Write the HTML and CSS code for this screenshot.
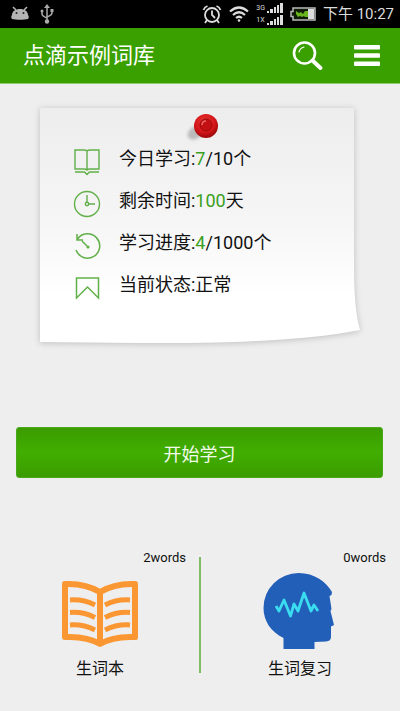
FILE: index.html
```html
<!DOCTYPE html>
<html lang="zh-CN">
<head>
<meta charset="utf-8">
<meta name="viewport" content="width=device-width, initial-scale=1">
<title>点滴示例词库</title>
<link rel="stylesheet" href="styles.css">
</head>
<body>
<div class="status">
  <div class="status-group status-left">
    <svg width="20" height="16" viewBox="0 0 20 16" aria-hidden="true">
      <path d="M3 1l3 3M17 1l-3 3" stroke="#b5b5b5" stroke-width="1.5"/>
      <path d="M2 9c0-8 16-8 16 0 1 1 1 3 0 4-4 1-12 1-16 0-1-1-1-3 0-4z" fill="#b5b5b5"/>
      <circle cx="6.500" cy="7" r="1" fill="#222"/><circle cx="13.500" cy="7" r="1" fill="#222"/>
    </svg>
    <svg width="14" height="20" viewBox="0 0 14 20" fill="none" stroke="#aaa" stroke-width="1.500" aria-hidden="true">
      <path d="M7 3v14M2 7v3q0 2 5 4M12 7v2q0 2-5 4"/>
      <path d="M4 4l3-4 3 4z" fill="#aaa" stroke="none"/>
      <circle cx="2" cy="7" r="1.500" fill="#aaa" stroke="none"/><path d="M10.500 5h3v3h-3z" fill="#aaa" stroke="none"/>
      <circle cx="7" cy="17.500" r="2.200" fill="#aaa" stroke="none"/>
    </svg>
  </div>
  <div class="status-group">
    <svg width="20" height="20" viewBox="0 0 20 20" fill="none" stroke="#ddd" stroke-width="1.800" aria-hidden="true">
      <circle cx="10" cy="11" r="7"/><path d="M10 6.500V11l3 3M1.500 6q1-3 4-4M18.500 6q-1-3-4-4M5 16l-2 3M15 16l2 3"/>
    </svg>
    <svg width="20" height="16" viewBox="0 0 20 16" fill="none" stroke="#ddd" stroke-width="2.200" aria-hidden="true">
      <path d="M1 5.500q9-8 18 0M4 9q6-5.500 12 0M7 12q3-2.500 6 0"/><circle cx="10" cy="14.500" r="1.300" fill="#ddd" stroke="none"/>
    </svg>
    <div class="signals">
      <div class="signal"><span>3G</span>
        <svg width="16" height="10" viewBox="0 0 16 10" fill="#ddd" aria-hidden="true"><path d="M0 8h2v2H0zM3 6h3v4H3zM7 4h2v6H7zM10 2h2v8h-2zM13 0h3v10h-3z"/></svg>
      </div>
      <div class="signal"><span>1X</span>
        <svg width="16" height="10" viewBox="0 0 16 10" fill="#ddd" aria-hidden="true"><path d="M0 8h2v2H0zM3 6h3v4H3zM7 4h2v6H7zM10 2h2v8h-2zM13 0h3v10h-3z"/></svg>
      </div>
    </div>
    <svg width="26" height="14" viewBox="0 0 26 14" aria-hidden="true">
      <path d="M3 1h22v12H3V9.500H1v-5h2z" fill="#101b08" stroke="#bbb" stroke-width="1.500"/>
      <path d="M18 2h6v10h-6z" fill="#ddd"/>
      <path d="M6 4l3 2 2-1 2 2 2-3h3v6h-3l-1-1-2 1-2-1-2 1-2-3z" fill="#69b51c"/>
    </svg>
    <span class="clock">下午 10:27</span>
  </div>
</div>

<header class="bar">
  <h1>点滴示例词库</h1>
  <button class="icon-btn" type="button" aria-label="搜索">
    <svg width="32" height="30" viewBox="0 0 32 30" fill="none" stroke="#fff" stroke-linecap="round" aria-hidden="true">
      <circle cx="12.500" cy="12" r="10.500" stroke-width="2.600"/><path d="M7 11q1-4 5-5" stroke-width="1.200"/>
      <path d="M20.500 19.500l8 7.500" stroke-width="4"/>
    </svg>
  </button>
  <button class="icon-btn" type="button" aria-label="菜单">
    <svg width="26" height="21" viewBox="0 0 26 21" fill="#fff" aria-hidden="true">
      <rect width="26" height="4.500" rx="1"/><rect y="8.200" width="26" height="4.500" rx="1"/><rect y="16.500" width="26" height="4.500" rx="1"/>
    </svg>
  </button>
</header>

<main>
  <section class="note">
    <svg class="paper" viewBox="0 0 322 236" preserveAspectRatio="none" aria-hidden="true">
      <defs><linearGradient id="paper" x2="0" y2="1"><stop stop-color="#ededed"/><stop offset=".5" stop-color="#f6f6f6"/><stop offset=".8" stop-color="#fff"/></linearGradient></defs>
      <path d="M0 0H315V160Q315 202 321 222Q250 236 100 235L0 234Z" fill="url(#paper)"/>
    </svg>
    <svg class="pin" width="36" height="32" viewBox="0 0 36 32" aria-hidden="true">
      <defs>
        <radialGradient id="pin" cx=".45" cy=".35" r=".6"><stop stop-color="#e83a36"/><stop offset=".7" stop-color="#d41519"/><stop offset="1" stop-color="#a50a0d"/></radialGradient>
        <filter id="soft" x="-.5" y="-.5" width="2" height="2"><feGaussianBlur stdDeviation="1.500"/></filter>
      </defs>
      <ellipse cx="11" cy="21" rx="8" ry="6" fill="#999" opacity=".6" filter="url(#soft)" transform="rotate(-35 11 21)"/>
      <circle cx="22" cy="14" r="12" fill="url(#pin)"/>
      <circle cx="22" cy="13" r="6" fill="#c21013" stroke="#a00a0d"/>
      <path d="M18 13q0-4 4-4" fill="none" stroke="#ee6a64" stroke-width="1.500"/>
    </svg>
    <ul class="stats">
      <li>
        <svg width="28" height="28" viewBox="0 0 28 28" fill="none" stroke="#62b04a" stroke-width="1.400" aria-hidden="true"><path d="M14 21V3q-1-1-3-1H2v19h9q2 0 3 1 1-1 3-1h9V2h-9q-2 0-3 1M2 24h9.500l2.500 2.500 2.500-2.500H26"/></svg>
        <span>今日学习:<b>7</b>/10个</span>
      </li>
      <li>
        <svg width="28" height="28" viewBox="0 0 28 28" fill="none" stroke="#62b04a" stroke-width="1.400" aria-hidden="true"><circle cx="14" cy="14" r="12.500"/><path d="M14 5v7.500M15.500 14H22"/><circle cx="14" cy="14" r="1.700"/></svg>
        <span>剩余时间:<b>100</b>天</span>
      </li>
      <li>
        <svg width="28" height="28" viewBox="0 0 28 28" fill="none" stroke="#62b04a" stroke-width="1.500" aria-hidden="true"><path d="M3 18A12.200 12.200 0 1 0 4.500 7M4 2v6h6M9 9l5 5"/><circle cx="15" cy="15" r="1.600" fill="#62b04a" stroke="none"/></svg>
        <span>学习进度:<b>4</b>/1000个</span>
      </li>
      <li>
        <svg width="28" height="28" viewBox="0 0 28 28" fill="none" stroke="#62b04a" stroke-width="1.500" aria-hidden="true"><path d="M3.500 4h22v20l-11-11-11 11z"/></svg>
        <span>当前状态:正常</span>
      </li>
    </ul>
  </section>

  <button class="start" type="button">开始学习</button>

  <nav class="tiles">
    <a class="tile" href="#words">
      <span class="count">2words</span>
      <svg width="78" height="78" viewBox="0 0 78 78" aria-hidden="true">
        <g fill="none" stroke="#fb9733" stroke-width="6" stroke-linejoin="round">
          <path d="M39 20Q24 11 4 12V65Q26 64 39 72Q52 64 74 65V12Q54 11 39 20V71"/>
          <path d="M9 28Q22 27 34 33M9 40.500Q22 39.500 34 45.500M9 53Q22 52 34 58M44 33Q56 27 69 28M44 45.500Q56 39.500 69 40.500M44 58Q56 52 69 53" stroke-width="5"/>
        </g>
      </svg>
      <span class="label">生词本</span>
    </a>
    <a class="tile" href="#review">
      <span class="count">0words</span>
      <svg width="74" height="78" viewBox="0 0 74 78" aria-hidden="true">
        <path d="M35.500 1C52 1 63 10 69 20L68.500 23 66.500 24 68.500 37 67.500 39 71 53 68 54.500V65Q68 69 63 69.500L51.500 70V77H20.500V66C8 60 .5 49 .5 36A35 35 0 0 1 35.500 1z" fill="#225fb8"/>
        <path d="M13 34l3 5 5-11L27.500 44l3.500-12 4 7L41 21l7 18 3-6 4 6" fill="none" stroke="#3adcf0" stroke-width="2.800" stroke-linejoin="round"/>
      </svg>
      <span class="label">生词复习</span>
    </a>
  </nav>
</main>
</body>
</html>
```
FILE: styles.css
```css
* { box-sizing: border-box; }

body {
  margin: 0;
  min-height: 100vh;
  background: #eee;
  color: #111;
  font-family: Roboto, "Noto Sans CJK SC", sans-serif;
}

svg { display: block; flex: none; }

.status {
  display: flex;
  align-items: center;
  justify-content: space-between;
  height: 28px;
  padding: 0 6px 0 10px;
  background: #000;
  color: #ddd;
}
.status-group { display: flex; align-items: center; gap: 7px; }
.status-left { gap: 10px; }
.signals { display: grid; gap: 2px; }
.signal { display: flex; align-items: center; gap: 2px; font-size: 7px; line-height: 10px; }
.clock { font-size: 15px; line-height: 20px; white-space: nowrap; }

.bar {
  display: flex;
  align-items: center;
  gap: 30px;
  height: 56px;
  padding: 0 20px 0 23px;
  background: #3aa000;
  border-bottom: 1px solid #8ecb6c;
}
.bar h1 {
  flex: 1;
  margin: 0;
  color: #fff;
  font-size: 22px;
  font-weight: 400;
  line-height: 32px;
}
.icon-btn { padding: 0; border: 0; background: none; cursor: pointer; }

.note {
  position: relative;
  min-height: 236px;
  margin: 24px 39px 0 40px;
  padding: 30px 0 36px 33px;
}
.paper {
  position: absolute;
  inset: 0;
  width: 100%;
  height: 100%;
  overflow: visible;
  filter: drop-shadow(0 1px 3px rgba(0, 0, 0, .2));
}
.pin { position: absolute; top: 4px; left: 50%; margin-left: -17px; }
.stats {
  position: relative;
  margin: 0;
  padding: 0;
  list-style: none;
}
.stats li {
  display: flex;
  align-items: center;
  gap: 18px;
  height: 42px;
  font-size: 18px;
  line-height: 24px;
}
.stats svg { margin-top: 6px; }
.stats b { color: #3a9f1c; font-weight: 400; }

.start {
  display: block;
  width: calc(100% - 33px);
  height: 51px;
  margin: 83px 17px 0 16px;
  padding: 0;
  border: 1px solid #4aa81c;
  border-radius: 3px;
  background: linear-gradient(#3b9c00, #41ae00 50%, #3b9c00);
  color: #f2faec;
  font: inherit;
  font-size: 18px;
  cursor: pointer;
}

.tiles {
  position: relative;
  display: grid;
  grid-template-columns: 1fr 1fr;
  margin-top: 71px;
}
.tiles::before {
  content: "";
  position: absolute;
  top: 8px;
  bottom: 8px;
  left: 50%;
  width: 2px;
  margin-left: -1px;
  background: #80bc66;
}
.tile {
  display: flex;
  flex-direction: column;
  align-items: center;
  color: inherit;
  text-decoration: none;
}
.count { align-self: flex-end; margin-right: 14px; font-size: 13px; line-height: 18px; }
.tile svg { margin: 5px 0 7px; }
.label { font-size: 16px; line-height: 24px; }
```
